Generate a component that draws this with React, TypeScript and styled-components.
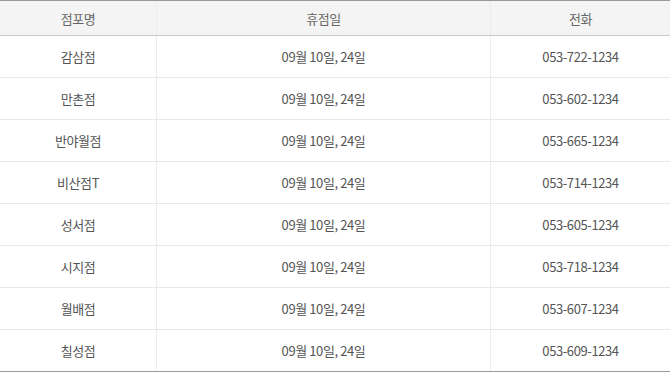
import React from 'react';
import styled, { createGlobalStyle } from 'styled-components';

const GlobalStyle = createGlobalStyle`
  html, body {
    margin: 0;
    padding: 0;
    background: #ffffff;
  }
  body {
    font-family: 'Malgun Gothic', 'Noto Sans CJK KR', 'Noto Sans', sans-serif;
  }
`;

const Table = styled.div`
  width: 670px;
  border-top: 1px solid #9a9a9a;
  border-bottom: 2px solid #9a9a9a;
  box-sizing: border-box;
`;

const Row = styled.div<{ $head?: boolean; $last?: boolean }>`
  display: grid;
  grid-template-columns: 156px 334px 1fr;
  height: ${p => (p.$head ? '34px' : '41px')};
  background: ${p => (p.$head ? '#f4f4f4' : '#ffffff')};
  border-bottom: ${p => (p.$last ? 'none' : p.$head ? '1px solid #c9c9c9' : '1px solid #e8e8e8')};
`;

const Cell = styled.div<{ $head?: boolean }>`
  display: flex;
  align-items: center;
  justify-content: center;
  font-size: 13px;
  letter-spacing: -0.4px;
  color: ${p => (p.$head ? '#666666' : '#555555')};
  border-left: 1px solid #ececec;
  padding-top: ${p => (p.$head ? '1px' : '0')};

  &:first-child {
    border-left: none;
  }
`;

const stores = [
  { name: '감삼점', phone: '053-722-1234' },
  { name: '만촌점', phone: '053-602-1234' },
  { name: '반야월점', phone: '053-665-1234' },
  { name: '비산점T', phone: '053-714-1234' },
  { name: '성서점', phone: '053-605-1234' },
  { name: '시지점', phone: '053-718-1234' },
  { name: '월배점', phone: '053-607-1234' },
  { name: '칠성점', phone: '053-609-1234' },
];

export default function App() {
  return (
    <>
      <GlobalStyle />
      <Table>
        <Row $head>
          <Cell $head>점포명</Cell>
          <Cell $head>휴점일</Cell>
          <Cell $head>전화</Cell>
        </Row>
        {stores.map((s, i) => (
          <Row key={s.name} $last={i === stores.length - 1}>
            <Cell>{s.name}</Cell>
            <Cell>09월 10일, 24일</Cell>
            <Cell>{s.phone}</Cell>
          </Row>
        ))}
      </Table>
    </>
  );
}
